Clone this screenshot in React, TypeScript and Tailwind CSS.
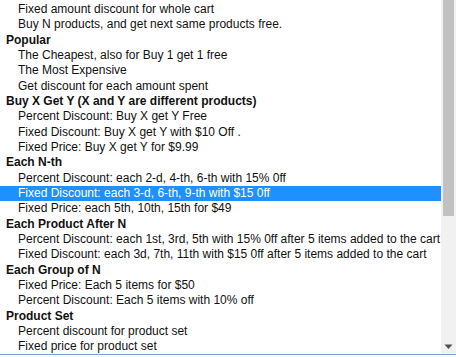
import { FC } from "react";

type Group = {
  label?: string;
  options: string[];
};

const groups: Group[] = [
  {
    options: [
      "Fixed amount discount for whole cart",
      "Buy N products, and get next same products free.",
    ],
  },
  {
    label: "Popular",
    options: [
      "The Cheapest, also for Buy 1 get 1 free",
      "The Most Expensive",
      "Get discount for each amount spent",
    ],
  },
  {
    label: "Buy X Get Y (X and Y are different products)",
    options: [
      "Percent Discount: Buy X get Y Free",
      "Fixed Discount: Buy X get Y with $10 Off .",
      "Fixed Price: Buy X get Y for $9.99",
    ],
  },
  {
    label: "Each N-th",
    options: [
      "Percent Discount: each 2-d, 4-th, 6-th with 15% 0ff",
      "Fixed Discount: each 3-d, 6-th, 9-th with $15 0ff",
      "Fixed Price: each 5th, 10th, 15th for $49",
    ],
  },
  {
    label: "Each Product After N",
    options: [
      "Percent Discount: each 1st, 3rd, 5th with 15% 0ff after 5 items added to the cart",
      "Fixed Discount: each 3d, 7th, 11th with $15 0ff after 5 items added to the cart",
    ],
  },
  {
    label: "Each Group of N",
    options: [
      "Fixed Price: Each 5 items for $50",
      "Percent Discount: Each 5 items with 10% off",
    ],
  },
  {
    label: "Product Set",
    options: ["Percent discount for product set", "Fixed price for product set"],
  },
];

const selected = "Fixed Discount: each 3-d, 6-th, 9-th with $15 0ff";

const Option: FC<{ text: string }> = ({ text }) => {
  const active = text === selected;
  return (
    <div
      className={
        active
          ? "h-[15.33px] pl-[18px] whitespace-nowrap bg-[#1e90ff] text-white"
          : "h-[15.33px] pl-[18px] whitespace-nowrap text-[#111]"
      }
    >
      {text}
    </div>
  );
};

export default function App() {
  return (
    <div className="w-[456px] h-[357px] bg-white overflow-hidden">
      <div className="flex h-[355px] border-b border-[#84a1cf] font-['Liberation_Sans',Arial,sans-serif] text-[12px] leading-[15.33px]">
        <div className="flex-1 pt-[2px] overflow-hidden">
          {groups.map((g, i) => (
            <div key={i}>
              {g.label && (
                <div className="h-[15.33px] pl-[6px] font-bold whitespace-nowrap text-[#111]">
                  {g.label}
                </div>
              )}
              {g.options.map((o) => (
                <Option key={o} text={o} />
              ))}
            </div>
          ))}
        </div>
        <div className="w-[15px] bg-[#f1f1f1] flex flex-col items-center">
          <div className="w-[11px] h-[216px] bg-[#c1c1c1]" />
          <div className="flex-1" />
          <svg width="9" height="6" viewBox="0 0 9 6" className="mb-[4px]">
            <path d="M0.5 0.5 H8.5 L4.5 5 Z" fill="#505050" />
          </svg>
        </div>
      </div>
    </div>
  );
}
